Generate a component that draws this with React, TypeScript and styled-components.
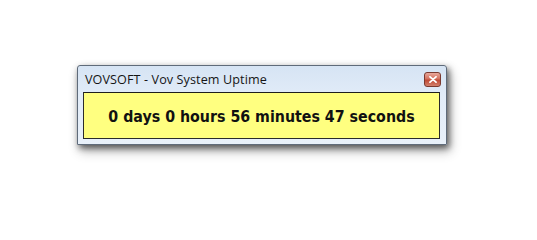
import React from "react";
import styled, { createGlobalStyle } from "styled-components";

const Global = createGlobalStyle`
  html, body { margin: 0; padding: 0; background: #ffffff; }
  body { width: 537px; height: 221px; overflow: hidden; }
`;

const Page = styled.div`
  padding: 65px 0 0 77px;
`;

const Window = styled.div`
  width: 370px;
  height: 80px;
  box-sizing: border-box;
  border: 1px solid #5f6b7a;
  border-radius: 3px 3px 0 0;
  background: linear-gradient(180deg, #d6e4f4 0%, #e2ecf8 40%, #e8f0f9 100%);
  box-shadow: 2px 3px 6px rgba(0, 0, 0, 0.55), 3px 6px 12px rgba(0, 0, 0, 0.3);
  display: flex;
  flex-direction: column;
  padding: 0 6px 5px 5px;
`;

const TitleBar = styled.div`
  height: 26px;
  display: flex;
  align-items: center;
  justify-content: space-between;
  padding-left: 2px;
`;

const Title = styled.span`
  font-family: "Open Sans", "Noto Sans", sans-serif;
  font-size: 12.6px;
  color: #151515;
  letter-spacing: 0.1px;
`;

const CloseButton = styled.div`
  width: 17px;
  height: 15px;
  box-sizing: border-box;
  border: 1px solid #7a3a30;
  border-radius: 3px;
  background: linear-gradient(180deg, #e9a99c 0%, #d4705e 45%, #c04a34 55%, #d2806c 100%);
  display: flex;
  align-items: center;
  justify-content: center;
  margin-right: -1px;
  margin-top: 1px;
`;

const Client = styled.div`
  flex: 1;
  box-sizing: border-box;
  border: 1px solid #2b2b2b;
  border-top-color: #1e1e1e;
  background: #ffff80;
  display: flex;
  align-items: center;
  justify-content: center;
`;

const Uptime = styled.span`
  font-family: "DejaVu Sans Condensed", "DejaVu Sans", sans-serif;
  font-weight: bold;
  font-size: 15.8px;
  color: #111111;
  margin-top: 1px;
`;

export default function App() {
  return (
    <>
      <Global />
      <Page>
        <Window>
          <TitleBar>
            <Title>VOVSOFT - Vov System Uptime</Title>
            <CloseButton>
              <svg width="8" height="7" viewBox="0 0 8 7">
                <path d="M1 0.8 L7 6.2 M7 0.8 L1 6.2" stroke="#ffffff" strokeWidth="1.8" strokeLinecap="round" />
              </svg>
            </CloseButton>
          </TitleBar>
          <Client>
            <Uptime>0 days 0 hours 56 minutes 47 seconds</Uptime>
          </Client>
        </Window>
      </Page>
    </>
  );
}
